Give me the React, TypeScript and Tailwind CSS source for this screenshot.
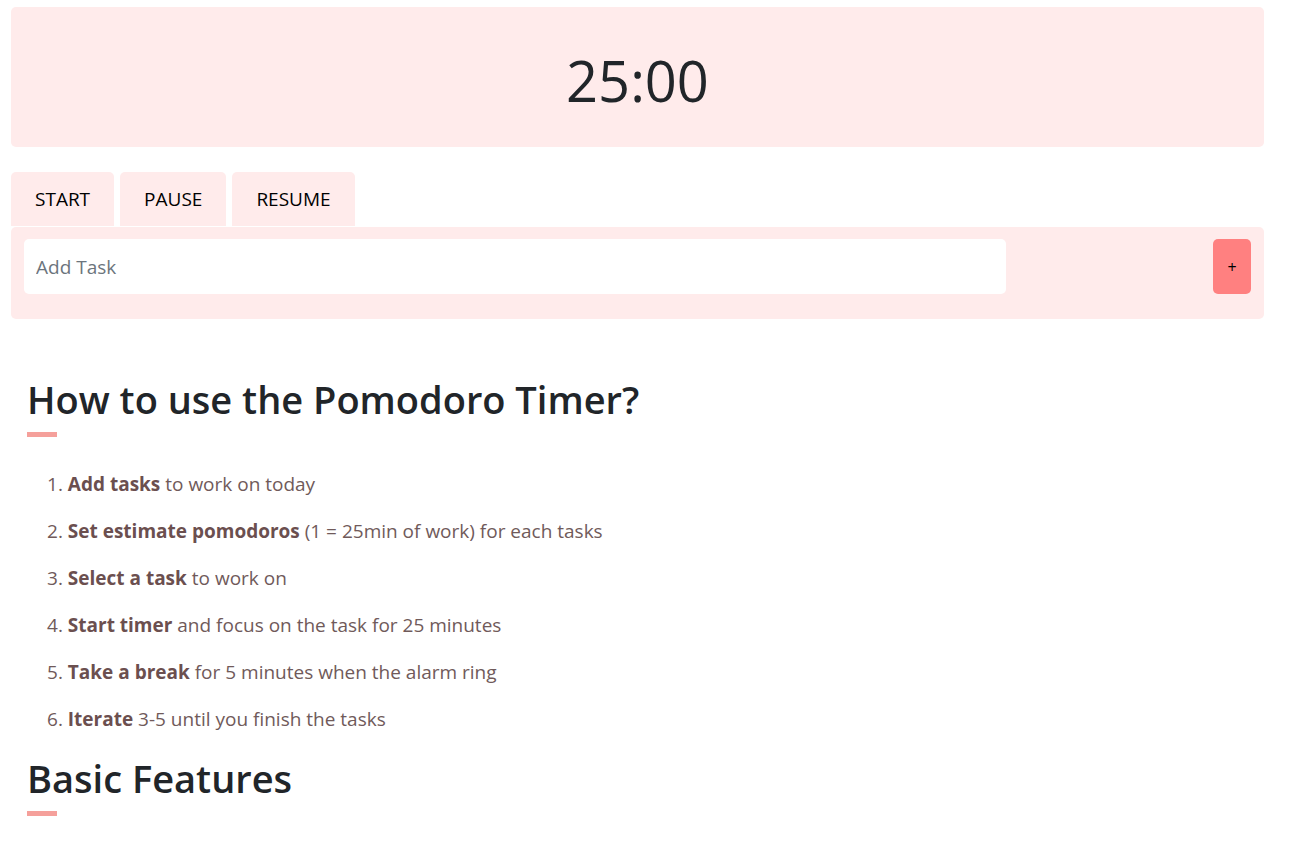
import { useState } from "react";

const steps = [
    { bold: "Add tasks", rest: " to work on today" },
    { bold: "Set estimate pomodoros", rest: " (1 = 25min of work) for each tasks" },
    { bold: "Select a task", rest: " to work on" },
    { bold: "Start timer", rest: " and focus on the task for 25 minutes" },
    { bold: "Take a break", rest: " for 5 minutes when the alarm ring" },
    { bold: "Iterate", rest: " 3-5 until you finish the tasks" },
];

export default function App() {
    const [task, setTask] = useState("");

    return (
        <div className="min-h-screen bg-white px-[11px] pt-[7px] font-['Open_Sans',sans-serif] text-[#212529]">
            <div className="w-[1253px]">
                <div className="flex h-[140px] items-center justify-center rounded-[5px] bg-[#ffebeb] pt-[6px]">
                    <span className="text-[56px] leading-none">25:00</span>
                </div>

                <div className="mt-[25px] flex gap-[6px]">
                    {["START", "PAUSE", "RESUME"].map((label) => (
                        <button
                            key={label}
                            className="h-[54px] rounded-t-[5px] bg-[#ffebeb] px-[24px] text-[19px] text-black"
                        >
                            {label}
                        </button>
                    ))}
                </div>

                <div className="mt-px flex items-center justify-between rounded-[5px] bg-[#ffebeb] px-[13px] py-[12px] pb-[25px]">
                    <input
                        value={task}
                        onChange={(e) => setTask(e.target.value)}
                        placeholder="Add Task"
                        className="h-[55px] w-[982px] rounded-[5px] bg-white px-3 text-[19px] outline-none placeholder:text-[#6c757d]"
                    />
                    <button className="h-[55px] w-[38px] rounded-[5px] bg-[#ff8080] text-[16px] text-black">+</button>
                </div>
            </div>

            <div className="px-4 pt-[56px]">
                <h2 className="text-[38px] font-semibold leading-[48px] text-[#212529]">How to use the Pomodoro Timer?</h2>
                <div className="mt-[9px] h-[5px] w-[30px] bg-[#f5a09b]" />

                <ol className="mt-[34px] flex flex-col gap-[21px] pl-[20px] text-[19px] leading-[26px] text-[#705a5a]">
                    {steps.map((s, i) => (
                        <li key={s.bold}>
                            {i + 1}. <b className="font-bold text-[#6b4f4f]">{s.bold}</b>
                            {s.rest}
                        </li>
                    ))}
                </ol>

                <h2 className="mt-[22px] text-[38px] font-semibold leading-[48px] text-[#212529]">Basic Features</h2>
                <div className="mt-[9px] h-[5px] w-[30px] bg-[#f5a09b]" />
            </div>
        </div>
    );
}
